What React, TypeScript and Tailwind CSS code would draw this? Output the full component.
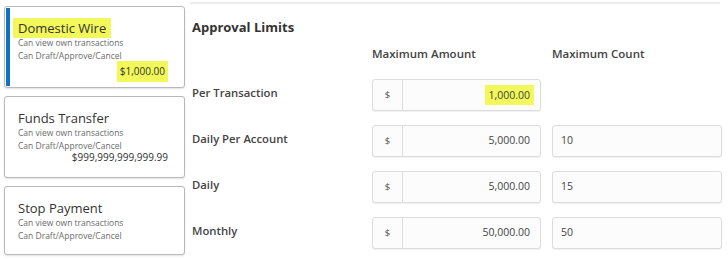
const font = { fontFamily: '"Open Sans", "Noto Sans", sans-serif' };

interface CardProps {
  title: string;
  amount?: string;
  active?: boolean;
  height: string;
}

function PermCard({ title, amount, active, height }: CardProps) {
  return (
    <div
      className={`relative rounded-[3px] border border-[#b9b9b9] bg-white shadow-[0_1px_2px_rgba(0,0,0,0.12)] ${height}`}
    >
      {active && <div className="absolute left-[1px] top-[1px] bottom-[1px] w-[4px] bg-[#0b72c4]" />}
      <div className="pl-[8px] pr-[16px] pt-[8px]">
        <div
          className={`inline-block px-[5px] leading-[20px] text-[13px] text-[#333] ${active ? 'bg-[#f2f75a]' : ''}`}
        >
          {title}
        </div>
        <div className="-mt-[3px] pl-[5px] text-[8.5px] leading-[13px] text-[#6b6b6b]">
          <div>Can view own transactions</div>
          <div>Can Draft/Approve/Cancel</div>
        </div>
        {amount && (
          <div className="-mt-[1px] flex justify-end text-[10px] leading-[13px] text-[#333]">
            <span className={active ? 'bg-[#f2f75a] px-[3px] py-[4px]' : ''}>{amount}</span>
          </div>
        )}
      </div>
    </div>
  );
}

function Row({ label, amount, count, highlight }: { label: string; amount: string; count?: string; highlight?: boolean }) {
  return (
    <div className="flex items-center h-[32px]">
      <div className="w-[180px] -mt-[4px] text-[11.3px] font-semibold text-[#444]">{label}</div>
      <div className="flex h-[32px] w-[169px] rounded-[3px] border border-[#dcdcdc] bg-[#fcfcfc] shadow-[0_1px_1px_rgba(0,0,0,0.06)]">
        <div className="flex w-[30px] items-center justify-center border-r border-[#dcdcdc] text-[9.5px] text-[#555]">$</div>
        <div className="flex flex-1 items-center justify-end pr-[6px] text-[10.5px] text-[#444]">
          <span className={highlight ? 'bg-[#f2f75a] px-[4px] leading-[20px]' : 'px-[4px]'}>{amount}</span>
        </div>
      </div>
      {count && (
        <div className="ml-[11px] flex h-[32px] w-[170px] items-center rounded-[3px] border border-[#dcdcdc] bg-[#fcfcfc] pl-[8px] text-[10.5px] text-[#444] shadow-[0_1px_1px_rgba(0,0,0,0.06)]">
          {count}
        </div>
      )}
    </div>
  );
}

export default function App() {
  return (
    <div className="w-[728px] h-[259px] bg-white overflow-hidden flex" style={font}>
      <div className="ml-[4px] mt-[6px] flex w-[181px] flex-col gap-[8px]">
        <PermCard title="Domestic Wire" amount="$1,000.00" active height="h-[82px]" />
        <PermCard title="Funds Transfer" amount="$999,999,999,999.99" height="h-[82px]" />
        <PermCard title="Stop Payment" height="h-[69px]" />
      </div>
      <div className="ml-[5px] flex-1">
        <div className="mt-[2px] mr-[8px] border-t-2 border-[#ececec]" />
        <div className="pl-[2px]">
          <div className="mt-[14px] text-[13px] font-bold text-[#333] leading-[18px]">Approval Limits</div>
          <div className="mt-[10px] flex text-[11.5px] font-semibold text-[#444] leading-[16px]">
            <div className="w-[180px]" />
            <div className="w-[180px]">Maximum Amount</div>
            <div>Maximum Count</div>
          </div>
          <div className="mt-[17px] flex flex-col gap-[14px]">
            <Row label="Per Transaction" amount="1,000.00" highlight />
            <Row label="Daily Per Account" amount="5,000.00" count="10" />
            <Row label="Daily" amount="5,000.00" count="15" />
            <Row label="Monthly" amount="50,000.00" count="50" />
          </div>
        </div>
      </div>
    </div>
  );
}
